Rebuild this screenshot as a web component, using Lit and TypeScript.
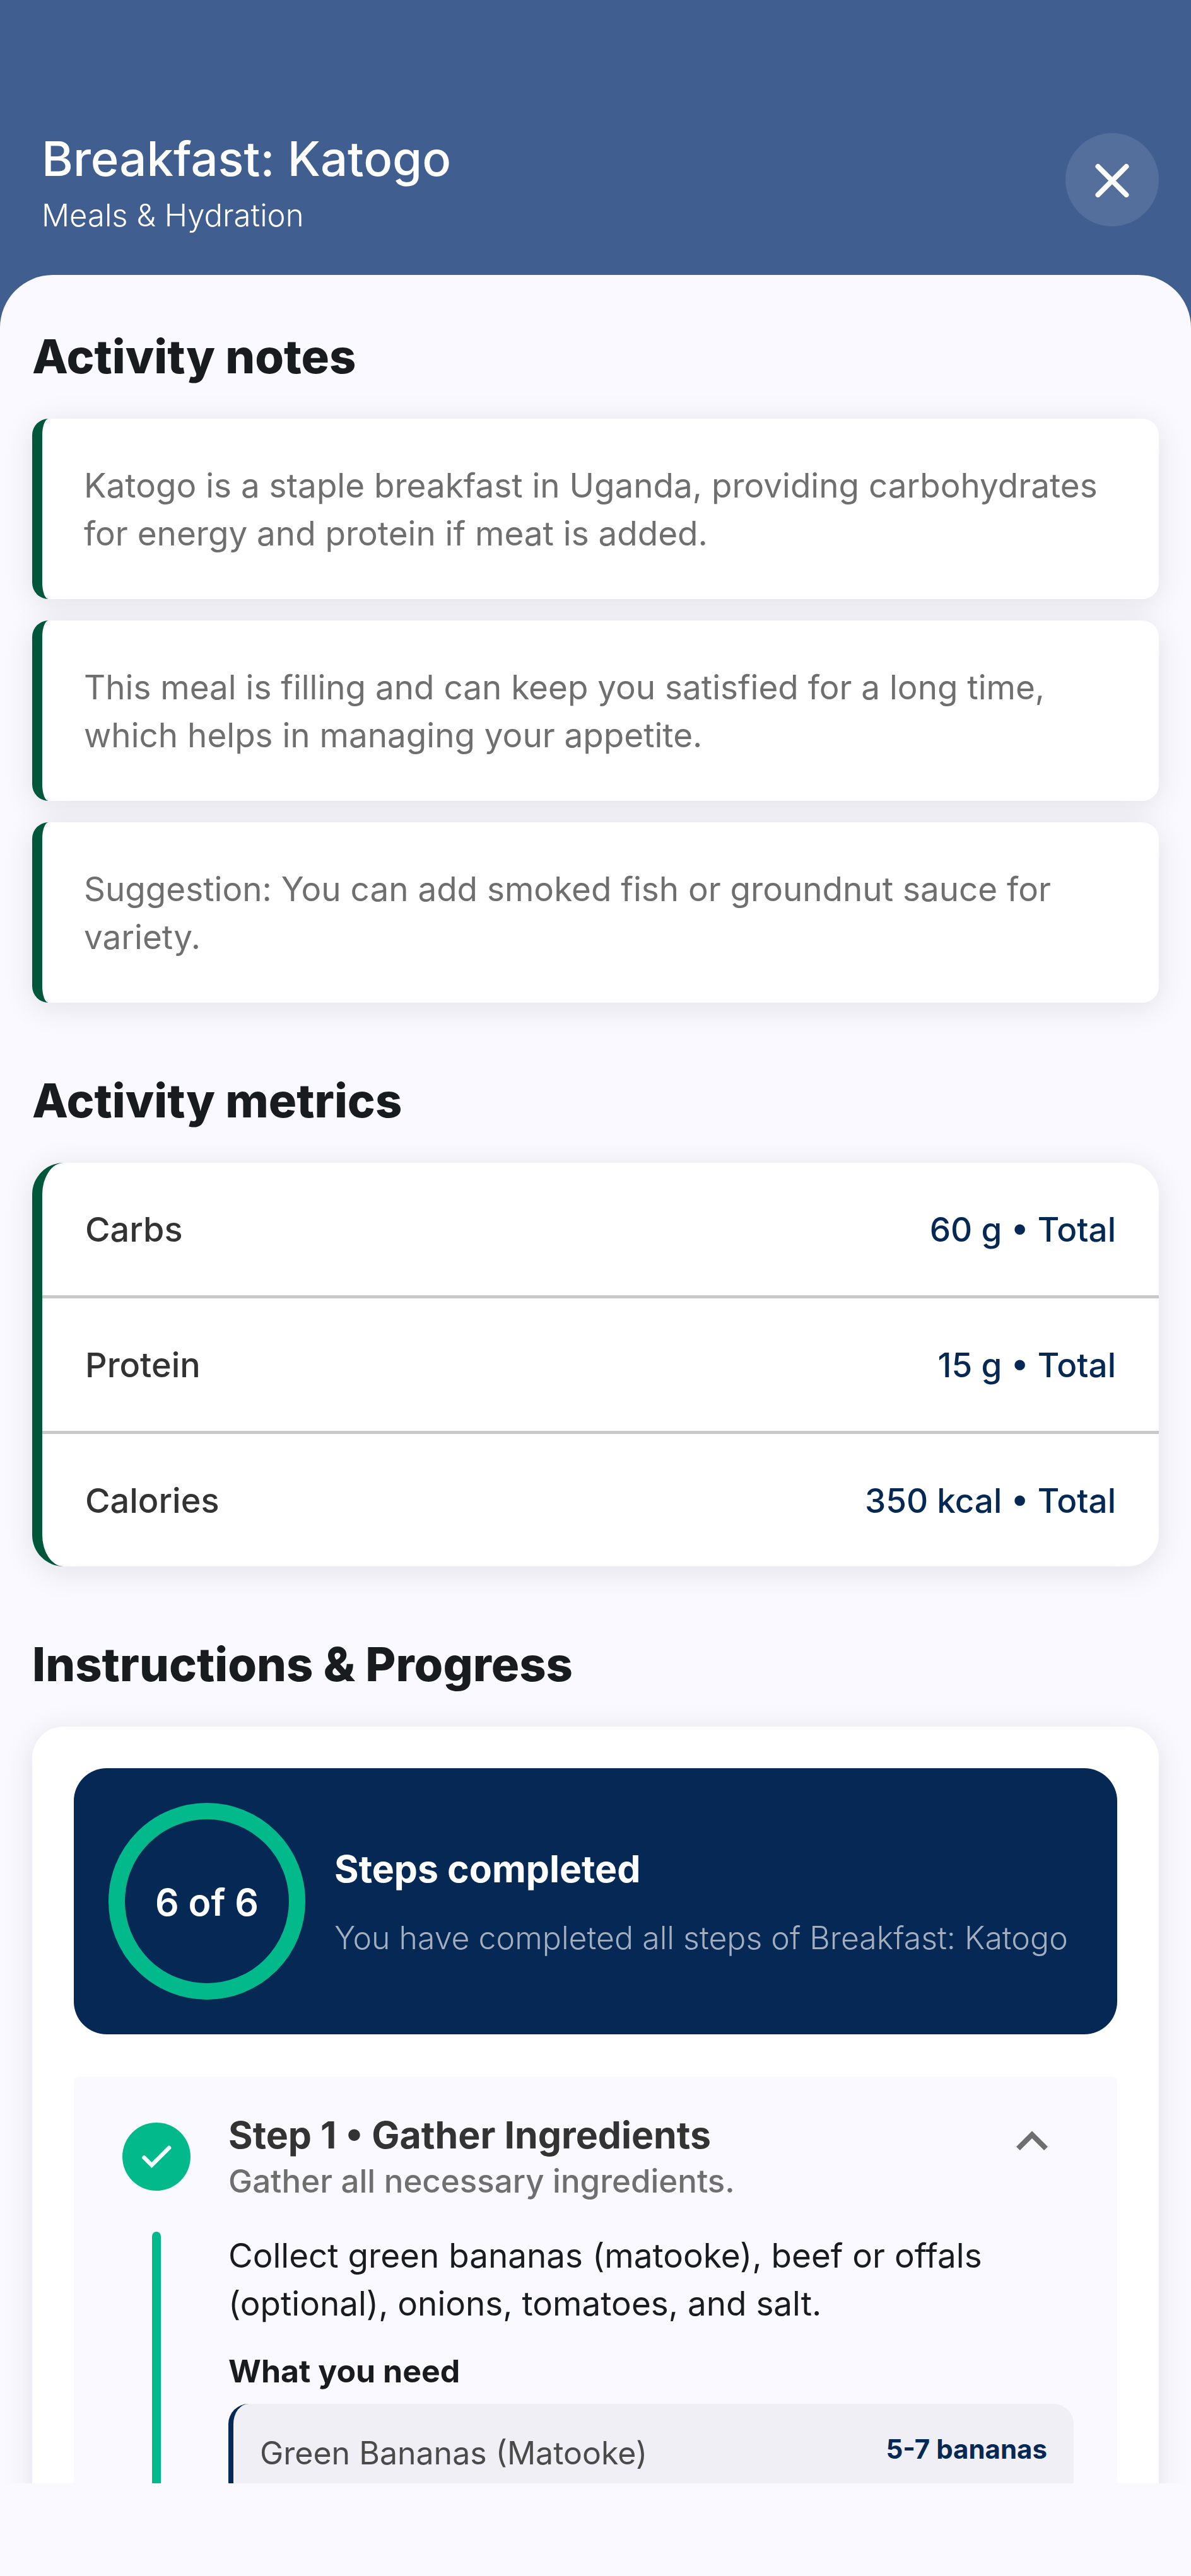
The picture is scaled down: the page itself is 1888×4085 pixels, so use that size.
import { LitElement, html, css } from "lit";
import { customElement, state } from "lit/decorators.js";

const NOTES = [
  "Katogo is a staple breakfast in Uganda, providing carbohydrates for energy and protein if meat is added.",
  "This meal is filling and can keep you satisfied for a long time, which helps in managing your appetite.",
  "Suggestion: You can add smoked fish or groundnut sauce for variety.",
];

const METRICS = [
  { name: "Carbs", value: "60 g" },
  { name: "Protein", value: "15 g" },
  { name: "Calories", value: "350 kcal" },
];

const INGREDIENTS = [{ name: "Green Bananas (Matooke)", amount: "5-7 bananas" }];

@customElement("app-root")
export class AppRoot extends LitElement {
  @state() private expanded = true;

  static styles = css`
    :host {
      display: flex;
      flex-direction: column;
      height: 100vh;
      box-sizing: border-box;
      padding-bottom: 147px;
      background: #faf9ff;
      color: #191c1f;
      font-family: Inter, "Liberation Sans", sans-serif;
    }
    * {
      box-sizing: border-box;
    }
    h1, h2, h3, h4, p, ul, dl, dt, dd {
      margin: 0;
      padding: 0;
      list-style: none;
    }
    button {
      flex: none;
      display: grid;
      place-items: center;
      padding: 0;
      border: 0;
      background: none;
      cursor: pointer;
    }
    svg {
      display: block;
    }
    .screen {
      flex: 1;
      min-height: 0;
      display: flex;
      flex-direction: column;
      overflow: hidden;
      background: #405e90;
    }
    .header {
      flex: none;
      display: flex;
      align-items: center;
      justify-content: space-between;
      padding: 199px 51px 66px 66px;
      color: #fff;
    }
    .heading {
      display: grid;
      gap: 11px;
    }
    .title {
      font-size: 76px;
      font-weight: 500;
      line-height: 104px;
    }
    .subtitle {
      font-size: 49px;
      font-weight: 300;
      line-height: 56px;
    }
    .close {
      width: 148px;
      height: 148px;
      border-radius: 50%;
      background: #546f9c;
    }
    .sheet {
      flex: 1;
      min-height: 0;
      display: flex;
      flex-direction: column;
      gap: 111px;
      padding: 85px 51px 68px;
      overflow-y: auto;
      scrollbar-width: none;
      border-radius: 84px 84px 0 0;
      background: #faf9ff;
    }
    .section {
      flex: none;
      display: grid;
      gap: 55px;
    }
    .section-title {
      font-size: 74px;
      font-weight: 800;
      line-height: 88px;
    }
    .card {
      background: #fff;
      box-shadow: 0 8px 50px rgba(20, 20, 40, 0.1);
    }
    .notes {
      display: grid;
      gap: 34px;
    }
    .note {
      padding: 68px 66px 66px;
      border-left: 16px solid #00573a;
      border-radius: 26px;
      color: #6f6f6f;
      font-size: 53px;
      font-weight: 400;
      line-height: 76px;
    }
    .metrics {
      border-left: 16px solid #00573a;
      border-radius: 50px;
    }
    .metric {
      display: flex;
      justify-content: space-between;
      padding: 69px 68px 67px;
      line-height: 74px;
      font-weight: 500;
    }
    .metric + .metric {
      border-top: 5px solid #c8c8c8;
    }
    .metric-name {
      color: #333;
      font-size: 54px;
    }
    .metric-value {
      color: #062854;
      font-size: 53px;
    }
    .progress-card {
      display: grid;
      gap: 67px;
      padding: 66px;
      border-radius: 50px;
    }
    .summary {
      display: flex;
      align-items: center;
      gap: 46px;
      padding: 55px;
      border-radius: 52px;
      background: #062854;
      color: #fff;
    }
    .ring {
      flex: none;
      display: grid;
      place-items: center;
      width: 312px;
      height: 312px;
      padding-top: 4px;
      border: 26px solid #02b98b;
      border-radius: 50%;
      font-size: 59px;
      font-weight: 600;
      line-height: 72px;
    }
    .summary-text {
      display: grid;
      gap: 43px;
    }
    .summary-title {
      font-size: 59px;
      font-weight: 700;
      line-height: 72px;
    }
    .summary-note {
      color: #a3afc0;
      font-size: 50px;
      font-weight: 300;
      line-height: 60px;
    }
    .step {
      display: grid;
      grid-template-columns: 108px minmax(0, 1fr);
      column-gap: 60px;
      row-gap: 47px;
      padding: 57px 69px 68px 77px;
      border-radius: 8px;
      background: #faf9ff;
    }
    .done {
      display: grid;
      place-items: center;
      width: 108px;
      height: 108px;
      margin-top: 16px;
      border-radius: 50%;
      background: #02b98b;
    }
    .step-head {
      display: flex;
      align-items: flex-start;
      justify-content: space-between;
      padding-right: 16px;
    }
    .step-titles {
      display: grid;
      gap: 4px;
    }
    .step-title {
      color: #333;
      font-size: 59px;
      font-weight: 700;
      line-height: 72px;
    }
    .step-summary {
      color: #6f6f6f;
      font-size: 51px;
      font-weight: 500;
      line-height: 66px;
    }
    .line {
      justify-self: center;
      width: 14px;
      border-radius: 7px;
      background: #02b98b;
    }
    .detail {
      font-size: 53px;
      font-weight: 400;
      line-height: 76px;
    }
    .need-title {
      margin: 37px 0 20px;
      font-size: 50px;
      font-weight: 700;
      line-height: 64px;
    }
    .need {
      border-left: 8px solid #062854;
      border-radius: 32px;
      background: #f0eff5;
    }
    .ingredient {
      display: flex;
      align-items: flex-start;
      justify-content: space-between;
      padding: 42px;
    }
    .ingredient-name {
      color: #4a4a4a;
      font-size: 50px;
      font-weight: 400;
      line-height: 72px;
    }
    .ingredient-amount {
      color: #062854;
      font-size: 42px;
      font-weight: 700;
      line-height: 60px;
    }
  `;

  render() {
    return html`
      <div class="screen">
        <header class="header">
          <div class="heading">
            <h1 class="title">Breakfast: Katogo</h1>
            <p class="subtitle">Meals &amp; Hydration</p>
          </div>
          <button class="close" aria-label="Close">
            <svg width="56" height="56" viewBox="0 0 56 56" fill="none" stroke="#fff" stroke-width="8" stroke-linecap="round">
              <path d="M5.5 7L50.5 52M50.5 7L5.5 52" />
            </svg>
          </button>
        </header>
        <main class="sheet">
          <section class="section">
            <h2 class="section-title">Activity notes</h2>
            <ul class="notes">
              ${NOTES.map((note) => html`<li class="note card">${note}</li>`)}
            </ul>
          </section>
          <section class="section">
            <h2 class="section-title">Activity metrics</h2>
            <dl class="metrics card">
              ${METRICS.map(
                (m) => html`<div class="metric">
                  <dt class="metric-name">${m.name}</dt>
                  <dd class="metric-value">${m.value} • Total</dd>
                </div>`,
              )}
            </dl>
          </section>
          <section class="section">
            <h2 class="section-title">Instructions &amp; Progress</h2>
            <div class="progress-card card">
              <div class="summary">
                <div class="ring">6 of 6</div>
                <div class="summary-text">
                  <h3 class="summary-title">Steps completed</h3>
                  <p class="summary-note">You have completed all steps of Breakfast: Katogo</p>
                </div>
              </div>
              ${this.renderStep()}
            </div>
          </section>
        </main>
      </div>
    `;
  }

  private renderStep() {
    return html`
      <article class="step">
        <span class="done">
          <svg width="64" height="64" viewBox="0 0 64 64" fill="none" stroke="#fff" stroke-width="6.5" stroke-linecap="round">
            <path d="M12.5 33.5L24.5 45.5L52 18" />
          </svg>
        </span>
        <div class="step-head">
          <div class="step-titles">
            <h3 class="step-title">Step 1 • Gather Ingredients</h3>
            <p class="step-summary">Gather all necessary ingredients.</p>
          </div>
          <button
            aria-label="Toggle step details"
            aria-expanded=${this.expanded}
            @click=${() => (this.expanded = !this.expanded)}
          >
            <svg width="100" height="100" viewBox="0 1 24 24" fill="#6f6f6f">
              <path d="M7.41 15.41L12 10.83l4.59 4.58L18 14l-6-6-6 6z" />
            </svg>
          </button>
        </div>
        ${this.expanded
          ? html`<span class="line"></span>
              <div>
                <p class="detail">
                  Collect green bananas (matooke), beef or offals (optional), onions, tomatoes, and salt.
                </p>
                <h4 class="need-title">What you need</h4>
                <ul class="need">
                  ${INGREDIENTS.map(
                    (i) => html`<li class="ingredient">
                      <span class="ingredient-name">${i.name}</span>
                      <span class="ingredient-amount">${i.amount}</span>
                    </li>`,
                  )}
                </ul>
              </div>`
          : null}
      </article>
    `;
  }
}
